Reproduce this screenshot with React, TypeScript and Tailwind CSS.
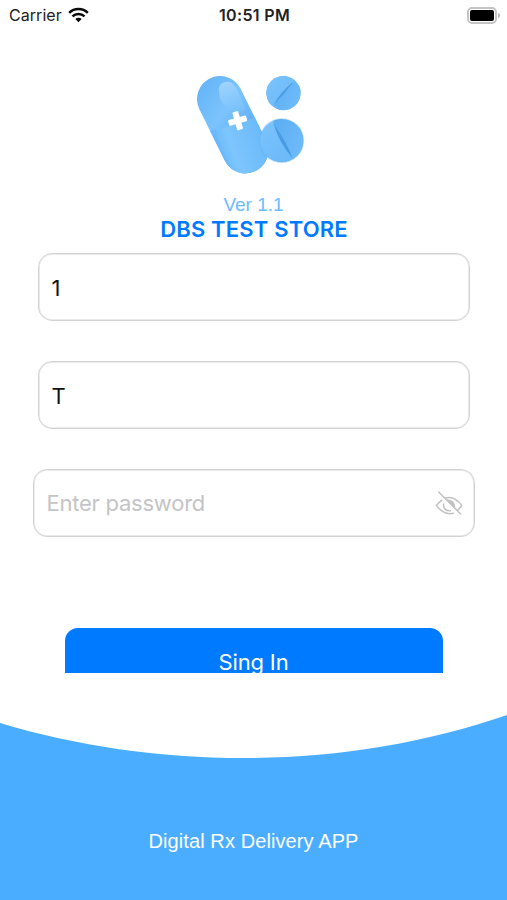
import React from "react";

function WifiIcon() {
  return (
    <svg width="21" height="16" viewBox="0 0 63 48" fill="none" stroke="#0a0a0a" strokeWidth="7.6">
      <path d="M3.5 17.5C19 2.5 44 2.5 59.5 17.5" />
      <path d="M13.5 28C23.5 18.5 39.5 18.5 49.5 28" />
      <path d="M31.5 46L22 36.3C27.5 31.2 35.5 31.2 41 36.3Z" fill="#0a0a0a" stroke="none" />
    </svg>
  );
}

function StatusBar() {
  return (
    <header className="grid h-[30px] shrink-0 grid-cols-3 items-center pl-[9px] pr-[7px] text-[#222]">
      <div className="flex items-center gap-[6px]">
        <span className="text-[16px] leading-[30px] tracking-[0.05px]">Carrier</span>
        <WifiIcon />
      </div>
      <span className="text-center text-[16px] font-semibold leading-[30px] tracking-[0.35px]">10:51 PM</span>
      <div className="flex items-center justify-end gap-[1px]">
        <div className="h-[17px] w-[30px] rounded-[5px] border-2 border-[#c4c4c4] p-[1px]">
          <div className="h-full w-full rounded-[2px] bg-black" />
        </div>
        <div className="h-[5px] w-[2px] rounded-r-full bg-[#bcbcbc]" />
      </div>
    </header>
  );
}

function PillLogo() {
  return (
    <svg width="130" height="115" viewBox="0 0 390 345" fill="none">
      <defs>
        <linearGradient id="upper" x1="45" y1="60" x2="200" y2="170" gradientUnits="userSpaceOnUse">
          <stop stopColor="#65b5f8" />
          <stop offset="0.55" stopColor="#7bc3fc" />
          <stop offset="1" stopColor="#62b2f7" />
        </linearGradient>
        <linearGradient id="lower" x1="95" y1="255" x2="240" y2="205" gradientUnits="userSpaceOnUse">
          <stop stopColor="#69b9fb" />
          <stop offset="0.3" stopColor="#7dc5fd" />
          <stop offset="1" stopColor="#6ab9fa" />
        </linearGradient>
        <linearGradient id="shine" x1="115" y1="55" x2="155" y2="145" gradientUnits="userSpaceOnUse">
          <stop stopColor="#9dd3ff" />
          <stop offset="1" stopColor="#76bffa" />
        </linearGradient>
        <linearGradient id="tablet" x1="0" y1="0" x2="1" y2="1">
          <stop stopColor="#7bc4fd" />
          <stop offset="1" stopColor="#68b6f8" />
        </linearGradient>
        <linearGradient id="tabletShade" x1="0" y1="0" x2="1" y2="0.5">
          <stop stopColor="#5aacf2" />
          <stop offset="1" stopColor="#70bcfb" />
        </linearGradient>
        <clipPath id="capsule">
          <rect x="-69" y="-69" width="138" height="310" rx="69" transform="translate(105 102) rotate(-26.3)" />
        </clipPath>
        <clipPath id="small"><circle cx="295" cy="84" r="52" /></clipPath>
        <clipPath id="large"><circle cx="290" cy="227" r="65" /></clipPath>
      </defs>
      <g clipPath="url(#capsule)">
        <rect width="390" height="345" fill="url(#upper)" />
        <path d="M48 206C95 191 148 191 240 142L300 345H70Z" fill="url(#lower)" />
        <path d="M48 206L92 191Q105 258 153 330L100 320Z" fill="#64b3f8" opacity="0.35" />
      </g>
      <path d="M102 84C97 55 119 47 136 52C153 58 162 85 181 133Q170 145 146 139C121 133 106 112 102 84Z" fill="url(#shine)" />
      <g transform="translate(158 167) rotate(-16)" fill="#fff">
        <rect x="-9" y="-28" width="18" height="56" rx="3" />
        <rect x="-28" y="-9" width="56" height="18" rx="3" />
      </g>
      <g clipPath="url(#small)">
        <circle cx="295" cy="84" r="52" fill="url(#tablet)" />
        <path d="M325 50Q287 80 267 118L285 140H350V65Z" fill="url(#tabletShade)" />
        <path d="M325 50Q287 80 267 118Q298 87 325 50Z" fill="#4b9be2" />
      </g>
      <circle cx="290" cy="227" r="67" fill="#5daef5" opacity="0.45" />
      <g clipPath="url(#large)">
        <circle cx="290" cy="227" r="65" fill="url(#tablet)" />
        <path d="M266 178Q284 236 323 280L380 260V150H266Z" fill="url(#tabletShade)" />
        <path d="M266 178Q284 236 323 280Q303 227 266 178Z" fill="#4b9be2" />
      </g>
    </svg>
  );
}

function HiddenEyeIcon() {
  return (
    <svg width="28" height="28" viewBox="0 0 84 84" fill="none" stroke="#c2c2c2" strokeWidth="4.5" strokeLinecap="round">
      <path d="M11 9L76 74" />
      <path d="M20 34Q10 42 4 49Q26 79 55 73" />
      <path d="M31 27Q58 19 80 49Q75 58 67 64" />
      <path d="M26 45A17 17 0 0 0 46 65" />
      <path d="M39 34Q55 34 58 51Q48 45 39 34Z" fill="#c2c2c2" />
    </svg>
  );
}

const field = "h-[68px] rounded-[14px] border border-[#d2d2d2] shadow-[inset_0_0_0_1px_#ebebeb]";

export default function App() {
  return (
    <div className="flex h-[900px] w-[507px] flex-col overflow-hidden bg-white font-[Inter,'Liberation_Sans',sans-serif]">
      <StatusBar />
      <main className="flex h-[643px] shrink-0 flex-col items-center overflow-hidden pt-[35px]">
        <div className="flex h-[115px] w-full shrink-0 pl-[185px]"><PillLogo /></div>
        <p className="mt-[13px] h-[24px] shrink-0 font-['Liberation_Sans',sans-serif] text-[19px] leading-[24px] text-[#6bbcff]">Ver 1.1</p>
        <h1 className="h-[25px] shrink-0 pl-[1px] text-[22px] font-semibold leading-[24px] tracking-[0.17px] text-[#007aff]">DBS TEST STORE</h1>
        <form className="flex w-full shrink-0 flex-col items-center pt-[11px]">
          <input aria-label="Store" defaultValue="1" className={`${field} w-[432px] px-[13px] pt-[2px] text-[22px] text-[#111] outline-none`} />
          <input aria-label="User" defaultValue="T" className={`${field} mt-[40px] w-[432px] px-[13px] pt-[2px] text-[22px] text-[#111] outline-none`} />
          <div className={`${field} mt-[40px] flex w-[442px] items-center pl-[13px] pr-[11px]`}>
            <input aria-label="Password" placeholder="Enter password" className="h-full min-w-0 flex-1 text-[22px] tracking-[-0.24px] text-[#111] outline-none placeholder:text-[#c4c4c6]" />
            <HiddenEyeIcon />
          </div>
          <button type="button" className="mt-[91px] h-[68px] w-[378px] rounded-[13px] bg-[#007aff] text-[22px] tracking-[-0.15px] text-white">Sing In</button>
        </form>
      </main>
      <div className="h-[41px] shrink-0" />
      <footer className="flex h-[186px] shrink-0 flex-col bg-[#4badff]">
        <svg className="block h-[46px] w-[507px] shrink-0" viewBox="0 0 507 46">
          <path d="M0 0H507V1C345 57 160 57 0 9Z" fill="white" />
        </svg>
        <p className="mt-[69px] text-center font-['Liberation_Sans',sans-serif] text-[20px] leading-[24px] tracking-[0.1px] text-white">Digital Rx Delivery APP</p>
      </footer>
    </div>
  );
}
